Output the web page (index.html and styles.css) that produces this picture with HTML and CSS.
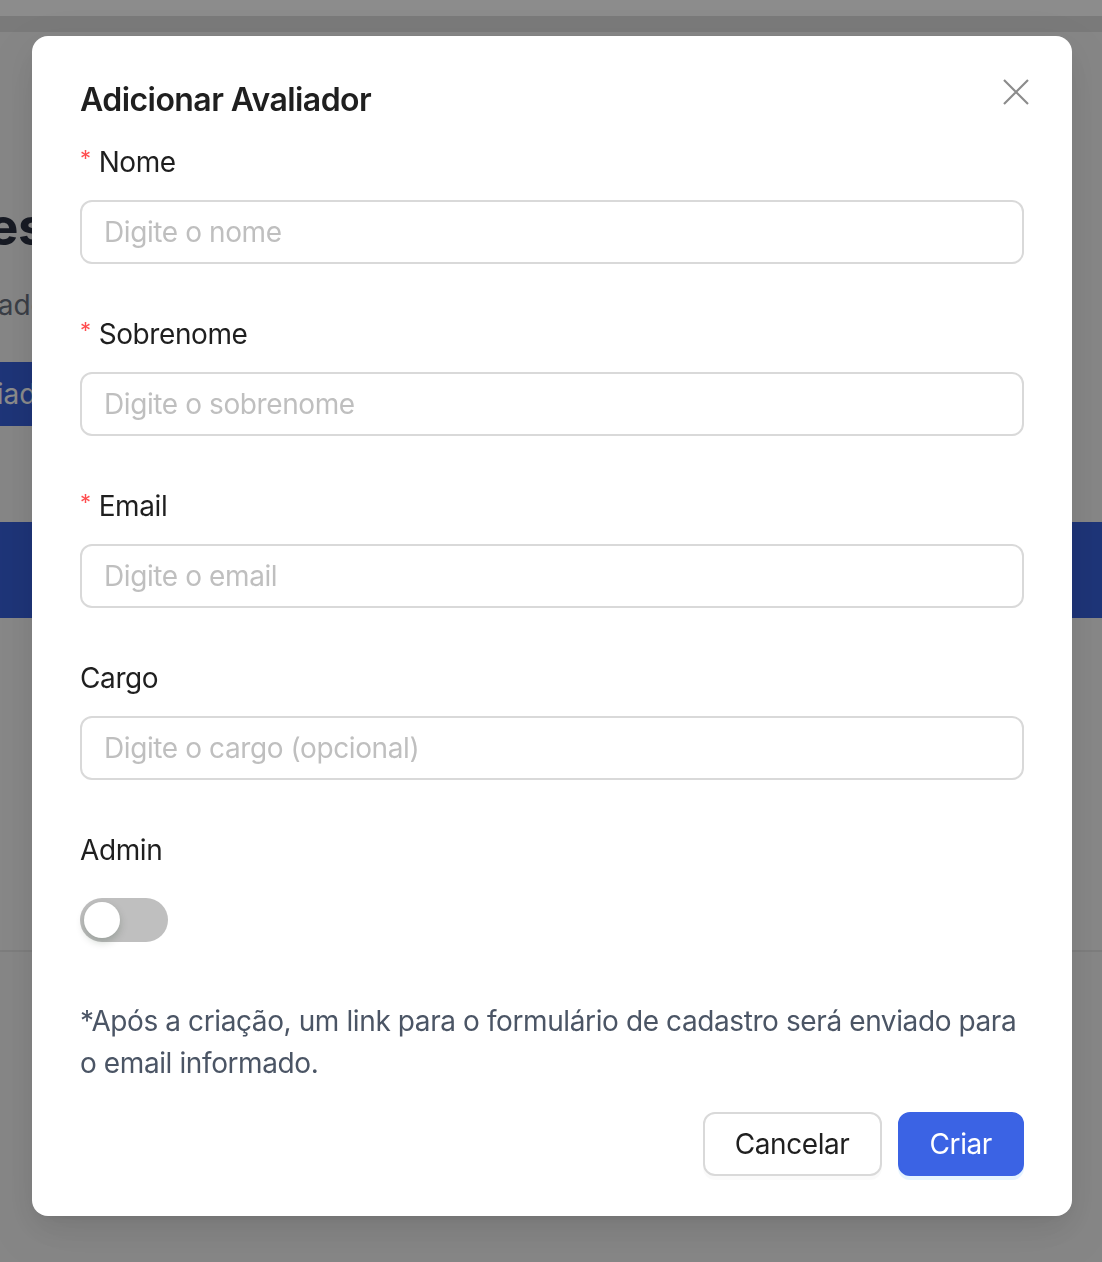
FILE: index.html
```html
<!DOCTYPE html>
<html lang="pt-BR">
<head>
<meta charset="utf-8">
<title>Adicionar Avaliador</title>
<link rel="stylesheet" href="styles.css">
</head>
<body>
<div class="page">
  <div class="topbar"></div>
  <div class="tabbar"></div>
  <main class="main">
    <div class="hero">
      <div class="clip">
        <div class="clip-row page-title"><span class="tail-title">Avaliadores</span></div>
        <div class="clip-row page-sub"><span class="tail-sub">Gerencie os avaliadores</span></div>
        <div class="clip-row btn-row"><span class="page-btn">Novo Avaliador</span></div>
      </div>
    </div>
    <div class="band"></div>
    <div class="section"></div>
    <div class="section-bottom"></div>
  </main>
</div>

<div class="overlay"></div>

<div class="modal" role="dialog" aria-labelledby="modal-title">
  <button class="modal-close" type="button" aria-label="Fechar">
    <svg viewBox="0 0 44 44" width="44" height="44" aria-hidden="true">
      <path d="M10 10 L34 34 M34 10 L10 34" stroke="#8c8c8c" stroke-width="2.2" fill="none" stroke-linecap="butt"/>
    </svg>
  </button>
  <h2 class="modal-title" id="modal-title">Adicionar Avaliador</h2>

  <form class="form">
    <div class="form-item">
      <label class="form-label"><span class="req">*</span>Nome</label>
      <input class="input" type="text" placeholder="Digite o nome">
    </div>
    <div class="form-item">
      <label class="form-label"><span class="req">*</span>Sobrenome</label>
      <input class="input" type="text" placeholder="Digite o sobrenome">
    </div>
    <div class="form-item">
      <label class="form-label"><span class="req">*</span>Email</label>
      <input class="input" type="text" placeholder="Digite o email">
    </div>
    <div class="form-item">
      <label class="form-label">Cargo</label>
      <input class="input" type="text" placeholder="Digite o cargo (opcional)">
    </div>
    <div class="form-item">
      <label class="form-label">Admin</label>
      <div class="switch-wrap">
        <span class="switch"><span class="switch-handle"></span></span>
      </div>
    </div>
    <p class="note">*Após a criação, um link para o formulário de cadastro será enviado para o email informado.</p>
    <div class="footer">
      <button class="btn btn-default" type="button">Cancelar</button>
      <button class="btn btn-primary" type="button">Criar</button>
    </div>
  </form>
</div>
</body>
</html>
```

FILE: styles.css
```css
* { box-sizing: border-box; }

html, body {
  margin: 0;
  padding: 0;
}

body {
  font-family: Inter, "Noto Sans", "Liberation Sans", sans-serif;
  background: #f5f5f5;
  width: 1102px;
  height: 1262px;
  overflow: hidden;
}

/* ---------- page behind the modal ---------- */
.page {
  display: flex;
  flex-direction: column;
  height: 1262px;
}

.topbar {
  height: 16px;
  background: #ffffff;
}

.tabbar {
  height: 16px;
  background: #dfdfdf;
}

.main {
  flex: 1;
  display: flex;
  flex-direction: column;
  background: #f5f5f5;
}

.hero {
  height: 490px;
}

/* only the first 32px of the page content peek out left of the modal */
.clip {
  width: 32px;
  overflow: hidden;
  display: flex;
  flex-direction: column;
  padding-top: 165px;
}

.clip-row {
  display: flex;
  justify-content: flex-start;
  white-space: nowrap;
}

.page-title {
  font-size: 52px;
  font-weight: 700;
  line-height: 60px;
  color: #2b3142;
  letter-spacing: -0.5px;
}

.tail-title {
  margin-left: -247px;
}

.page-sub {
  margin-top: 28px;
  font-size: 28px;
  line-height: 40px;
  color: #6b7280;
}

.tail-sub {
  margin-left: -229px;
}

.btn-row {
  margin-top: 37px;
}

.page-btn {
  display: flex;
  align-items: center;
  height: 64px;
  padding-left: 24px;
  margin-left: -160px;
  background: #3760dc;
  color: #ffffff;
  font-size: 28px;
}

.band {
  height: 96px;
  background: #3760dc;
}

.section {
  height: 334px;
  background: #f7f7f7;
  border-bottom: 2px solid #e6e6e6;
}

.section-bottom {
  flex: 1;
  background: #f5f5f5;
}

/* ---------- overlay + modal ---------- */
.overlay {
  position: fixed;
  inset: 0;
  background: rgba(0, 0, 0, 0.45);
}

.modal {
  position: fixed;
  top: 36px;
  left: 32px;
  width: 1040px;
  padding: 40px 48px 40px;
  background: #ffffff;
  border-radius: 16px;
  letter-spacing: -0.4px;
  box-shadow:
    0 12px 32px 0 rgba(0, 0, 0, 0.08),
    0 6px 12px -8px rgba(0, 0, 0, 0.12),
    0 18px 56px 16px rgba(0, 0, 0, 0.05);
}

.modal-close {
  position: absolute;
  top: 34px;
  right: 34px;
  width: 44px;
  height: 44px;
  padding: 0;
  border: 0;
  background: transparent;
  display: flex;
  align-items: center;
  justify-content: center;
  cursor: pointer;
}

.modal-title {
  margin: 0 0 16px;
  font-size: 32px;
  line-height: 48px;
  font-weight: 600;
  letter-spacing: -0.55px;
  color: #1f1f1f;
}

.form {
  display: flex;
  flex-direction: column;
  margin: 0;
}

.form-item {
  display: flex;
  flex-direction: column;
  margin-bottom: 48px;
}

.form-label {
  display: flex;
  align-items: center;
  height: 44px;
  margin-bottom: 16px;
  font-size: 28px;
  color: #1f1f1f;
}

.req {
  display: inline-block;
  font-size: 22px;
  line-height: 1;
  color: #ff4d4f;
  margin-right: 8px;
  align-self: center;
  transform: translateY(-4px);
}

.input {
  display: block;
  width: 100%;
  height: 64px;
  padding: 0 22px;
  border: 2px solid #d9d9d9;
  border-radius: 12px;
  font-family: inherit;
  font-size: 28px;
  letter-spacing: -0.4px;
  color: #1f1f1f;
  background: #ffffff;
  outline: none;
}

.input::placeholder {
  color: #bfbfbf;
}

.switch-wrap {
  height: 64px;
  display: flex;
  align-items: center;
}

.switch {
  position: relative;
  display: inline-block;
  width: 88px;
  height: 44px;
  border-radius: 22px;
  background: #bfbfbf;
}

.switch-handle {
  position: absolute;
  top: 4px;
  left: 4px;
  width: 36px;
  height: 36px;
  border-radius: 50%;
  background: #ffffff;
  box-shadow: 0 4px 8px 0 rgba(0, 35, 11, 0.2);
}

.note {
  margin: 0;
  font-size: 28px;
  line-height: 42px;
  color: #4b5565;
}

.footer {
  display: flex;
  justify-content: flex-end;
  gap: 16px;
  margin-top: 28px;
}

.btn {
  height: 64px;
  padding: 0 30px;
  border-radius: 12px;
  font-family: inherit;
  font-size: 28px;
  letter-spacing: -0.4px;
  cursor: pointer;
}

.btn-default {
  background: #ffffff;
  border: 2px solid #d9d9d9;
  color: #1f1f1f;
  box-shadow: 0 4px 0 rgba(0, 0, 0, 0.02);
}

.btn-primary {
  background: #3b63e4;
  border: 2px solid #3b63e4;
  color: #ffffff;
  box-shadow: 0 4px 0 rgba(5, 145, 255, 0.1);
}
```
